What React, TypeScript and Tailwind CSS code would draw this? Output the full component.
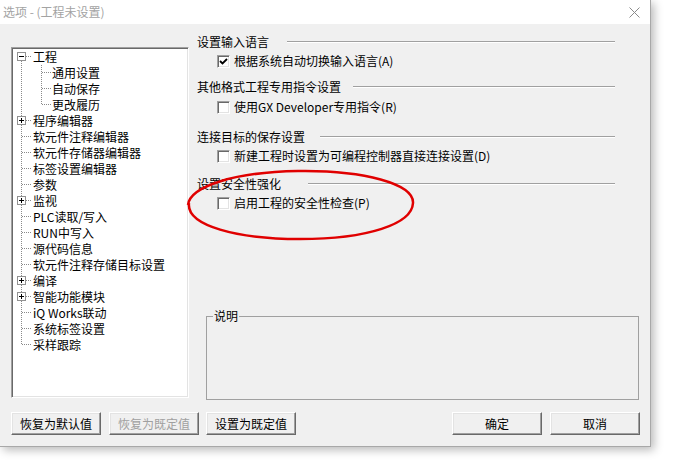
import React from "react";

type Row = { label: string; kind: "root" | "child"; box?: "+" | "-"; first?: boolean; last?: boolean };

const rows: Row[] = [
  { label: "工程", kind: "root", box: "-", first: true },
  { label: "通用设置", kind: "child" },
  { label: "自动保存", kind: "child" },
  { label: "更改履历", kind: "child", last: true },
  { label: "程序编辑器", kind: "root", box: "+" },
  { label: "软元件注释编辑器", kind: "root" },
  { label: "软元件存储器编辑器", kind: "root" },
  { label: "标签设置编辑器", kind: "root" },
  { label: "参数", kind: "root" },
  { label: "监视", kind: "root", box: "+" },
  { label: "PLC读取/写入", kind: "root" },
  { label: "RUN中写入", kind: "root" },
  { label: "源代码信息", kind: "root" },
  { label: "软元件注释存储目标设置", kind: "root" },
  { label: "编译", kind: "root", box: "+" },
  { label: "智能功能模块", kind: "root", box: "+" },
  { label: "iQ Works联动", kind: "root" },
  { label: "系统标签设置", kind: "root" },
  { label: "采样跟踪", kind: "root", last: true },
];

const dot = { stroke: "#8a8a8a", strokeWidth: 1, strokeDasharray: "1 1", shapeRendering: "crispEdges" as const };

function Connector({ row }: { row: Row }) {
  if (row.kind === "child") {
    return (
      <svg width={39} height={16} className="shrink-0">
        <line x1={8.5} y1={0} x2={8.5} y2={16} {...dot} />
        <line x1={28.5} y1={0} x2={28.5} y2={row.last ? 8 : 16} {...dot} />
        <line x1={29} y1={7.5} x2={38} y2={7.5} {...dot} />
      </svg>
    );
  }
  const y1 = row.first ? 8 : 0;
  const y2 = row.last ? 8 : 16;
  return (
    <svg width={20} height={16} className="shrink-0">
      <line x1={8.5} y1={y1} x2={8.5} y2={y2} {...dot} />
      <line x1={9} y1={7.5} x2={19} y2={7.5} {...dot} />
      {row.box && (
        <g shapeRendering="crispEdges">
          <rect x={4.5} y={3.5} width={8} height={8} fill="#fff" stroke="#919191" />
          <line x1={6} y1={7.5} x2={11} y2={7.5} stroke="#000" />
          {row.box === "+" && <line x1={8.5} y1={5} x2={8.5} y2={10} stroke="#000" />}
        </g>
      )}
    </svg>
  );
}

function Header({ label, w, className = "" }: { label: string; w: string; className?: string }) {
  return (
    <div className={`flex items-center h-[16px] mr-[25px] ${className}`}>
      <span className={`shrink-0 ${w} whitespace-nowrap`}>{label}</span>
      <div className="flex-1 h-[2px] border-t border-t-[#a0a0a0] border-b border-b-white" />
    </div>
  );
}

function Check({ label, checked, className = "" }: { label: string; checked?: boolean; className?: string }) {
  return (
    <div className={`flex items-center h-[16px] pl-[20px] ${className}`}>
      <div className="w-[13px] h-[13px] bg-white border border-t-[#a0a0a0] border-l-[#a0a0a0] border-b-white border-r-white shadow-[inset_1px_1px_0_#696969,inset_-1px_-1px_0_#e3e3e3] flex items-center justify-center shrink-0">
        {checked && (
          <svg width="9" height="9" viewBox="0 0 9 9">
            <path d="M1 4 L3.5 6.5 L8 2" stroke="#000" strokeWidth="1.8" fill="none" />
          </svg>
        )}
      </div>
      <span className="ml-[4px] whitespace-nowrap">{label}</span>
    </div>
  );
}

function Btn({ label, disabled, className = "" }: { label: string; disabled?: boolean; className?: string }) {
  return (
    <div
      className={`w-[90px] h-[23px] flex items-center justify-center bg-[#f0f0f0] border border-t-white border-l-white border-r-[#696969] border-b-[#696969] shadow-[inset_-1px_-1px_0_#a0a0a0,inset_1px_1px_0_#e3e3e3] ${
        disabled ? "text-[#a0a0a0]" : "text-black"
      } ${className}`}
    >
      {label}
    </div>
  );
}

export default function App() {
  return (
    <div className="w-[677px] h-[462px] bg-white overflow-hidden font-['Noto_Sans_CJK_SC','Noto_Sans',sans-serif] text-[12px] leading-[16px] text-black">
      <div className="w-[651px] h-[447px] flex flex-col bg-[#f0f0f0] border-r border-b border-[#a8a8a8] shadow-[3px_3px_9px_rgba(0,0,0,0.28)]">
        <div className="h-[24px] bg-white flex items-center justify-between pl-[3px] pr-[10px] shrink-0">
          <span className="text-[#a3a3a3]">选项 - (工程未设置)</span>
          <svg width="11" height="11" viewBox="0 0 11 11">
            <path d="M0.5 0.5 L10.5 10.5 M10.5 0.5 L0.5 10.5" stroke="#8a8a8a" strokeWidth="1" />
          </svg>
        </div>
        <div className="flex-1 relative flex flex-col pt-[10px] pl-[11px] pr-[10px]">
          <div className="flex h-[366px]">
            <div className="mt-[13px] w-[178px] h-[351px] bg-white border border-t-[#a0a0a0] border-l-[#a0a0a0] border-b-white border-r-white shadow-[inset_1px_1px_0_#696969,inset_-1px_-1px_0_#e3e3e3] pt-[1px] pl-[1px]">
              {rows.map((r) => (
                <div key={r.label} className="flex items-center h-[16px]">
                  <Connector row={r} />
                  <span className="whitespace-nowrap">{r.label}</span>
                </div>
              ))}
            </div>
            <div className="ml-[8px] flex-1 flex flex-col">
              <Header label="设置输入语言" w="w-[90px]" />
              <Check label="根据系统自动切换输入语言(A)" checked className="mt-[3px]" />
              <Header label="其他格式工程专用指令设置" w="w-[156px]" className="mt-[10px]" />
              <Check label="使用GX Developer专用指令(R)" className="mt-[4px]" />
              <Header label="连接目标的保存设置" w="w-[123px]" className="mt-[14px]" />
              <Check label="新建工程时设置为可编程控制器直接连接设置(D)" className="mt-[3px]" />
              <Header label="设置安全性强化" w="w-[111px]" className="mt-[12px]" />
              <Check label="启用工程的安全性检查(P)" className="mt-[3px]" />
              <fieldset className="mt-[97px] ml-[9px] mr-[1px] h-[92px] border border-[#a0a0a0] px-[6px]">
                <legend className="px-[1px] leading-[16px]">说明</legend>
              </fieldset>
            </div>
          </div>
          <div className="flex items-center mt-[12px]">
            <Btn label="恢复为默认值" />
            <Btn label="恢复为既定值" disabled className="ml-[8px]" />
            <Btn label="设置为既定值" className="ml-[7px]" />
            <div className="flex-1" />
            <Btn label="确定" />
            <Btn label="取消" className="ml-[8px]" />
          </div>
          <svg className="absolute left-[186px] top-[144px] pointer-events-none" width="232" height="76" viewBox="0 0 232 76">
            <path
              d="M2 37 C 4 18, 50 4, 112 3 C 178 2, 228 16, 227 35 C 226 56, 182 71, 114 71 C 52 71, 0 58, 3 35"
              fill="none"
              stroke="#e00000"
              strokeWidth="2.5"
            />
          </svg>
        </div>
      </div>
    </div>
  );
}
